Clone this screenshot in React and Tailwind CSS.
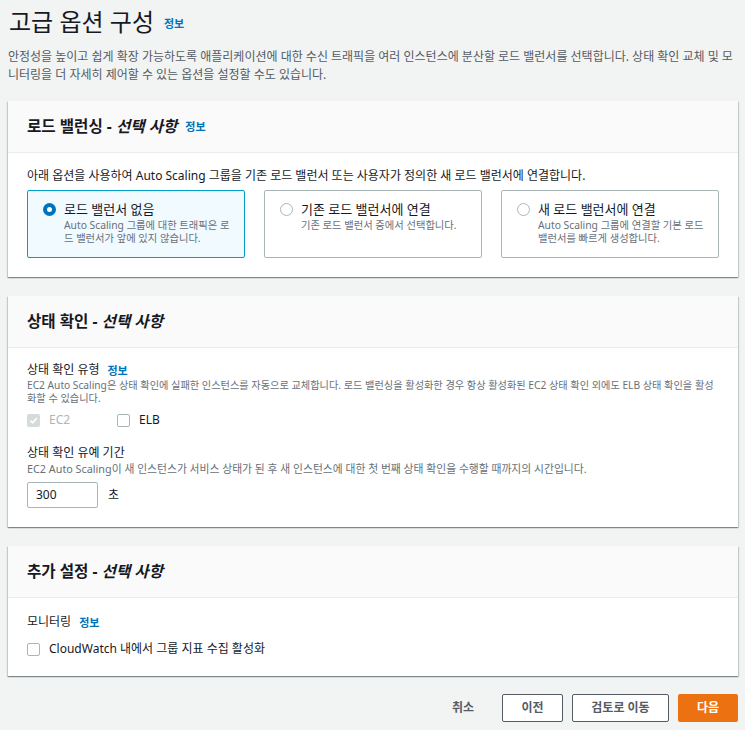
import React from "react";

const FONT = { fontFamily: '"Noto Sans", "Noto Sans CJK KR", sans-serif' };

function Info() {
  return <span className="ml-[8px] text-[11px] font-bold text-[#0073bb] leading-none">정보</span>;
}

function Card({ title, info, children, bodyClass }) {
  return (
    <div className="bg-white shadow-[0_1px_1px_0_rgba(0,28,36,0.3),1px_1px_1px_0_rgba(0,28,36,0.15),-1px_1px_1px_0_rgba(0,28,36,0.15)]">
      <div className="h-[52px] bg-[#fafafa] border-b border-[#eaeded] flex items-center px-[19px]">
        <span className="text-[15.6px] font-bold text-[#16191f]">
          {title} - <i>선택 사항</i>
        </span>
        {info && <Info />}
      </div>
      <div className={bodyClass}>{children}</div>
    </div>
  );
}

function Radio({ checked }) {
  return checked ? (
    <span className="mt-[3px] w-[13px] h-[13px] rounded-full border-[4px] border-[#0073bb] bg-white shrink-0" />
  ) : (
    <span className="mt-[3px] w-[13px] h-[13px] rounded-full border border-[#aab7b8] bg-white shrink-0" />
  );
}

function Tile({ checked, title, desc }) {
  return (
    <div
      className={
        "flex-1 h-[68px] border rounded-[2px] flex gap-[8px] pl-[15px] pr-[10px] pt-[9px] " +
        (checked ? "border-[#00a1c9] bg-[#f1faff]" : "border-[#aab7b8] bg-white")
      }
    >
      <Radio checked={checked} />
      <div className="min-w-0">
        <div className="text-[13px] leading-[18px] text-[#16191f]">{title}</div>
        <div className="text-[10.3px] leading-[13px] text-[#687078] mt-[1px]">{desc}</div>
      </div>
    </div>
  );
}

function Checkbox({ checked, disabled }) {
  if (checked && disabled) {
    return (
      <span className="w-[13px] h-[13px] rounded-[2px] bg-[#d5dbdb] flex items-center justify-center shrink-0">
        <svg width="9" height="9" viewBox="0 0 10 10">
          <path d="M1.5 5.2 L4 7.6 L8.6 2.4" fill="none" stroke="white" strokeWidth="1.8" />
        </svg>
      </span>
    );
  }
  return <span className="w-[13px] h-[13px] rounded-[2px] border border-[#aab7b8] bg-white shrink-0" />;
}

export default function App() {
  return (
    <div style={FONT} className="bg-[#f2f3f3] min-h-[730px] pl-[8px] pr-[7px] pt-[6px] pb-[10px] text-[#16191f]">
      <div className="flex items-center h-[32px]">
        <h1 className="text-[24px] leading-[32px] font-normal text-[#16191f] pl-[1px]">고급 옵션 구성</h1>
        <span className="ml-[10px] mt-[4px] text-[11px] font-bold text-[#0073bb]">정보</span>
      </div>
      <p className="mt-[10px] text-[12px] leading-[18px] text-[#545b64]">
        안정성을 높이고 쉽게 확장 가능하도록 애플리케이션에 대한 수신 트래픽을 여러 인스턴스에 분산할 로드 밸런서를 선택합니다. 상태 확인 교체 및 모니터링을 더 자세히 제어할 수 있는 옵션을 설정할 수도 있습니다.
      </p>

      <div className="mt-[17px] flex flex-col gap-[19px]">
        <Card title="로드 밸런싱" info bodyClass="px-[19px] pt-[14px] pb-[19px]">
          <div className="text-[12px] leading-[18px] text-[#16191f]">
            아래 옵션을 사용하여 Auto Scaling 그룹을 기존 로드 밸런서 또는 사용자가 정의한 새 로드 밸런서에 연결합니다.
          </div>
          <div className="mt-[5px] flex gap-[19px]">
            <Tile checked title="로드 밸런서 없음" desc="Auto Scaling 그룹에 대한 트래픽은 로드 밸런서가 앞에 있지 않습니다." />
            <Tile title="기존 로드 밸런서에 연결" desc="기존 로드 밸런서 중에서 선택합니다." />
            <Tile title="새 로드 밸런서에 연결" desc="Auto Scaling 그룹에 연결할 기본 로드 밸런서를 빠르게 생성합니다." />
          </div>
        </Card>

        <Card title="상태 확인" bodyClass="px-[19px] pt-[13px] pb-[19px]">
          <div className="flex items-center text-[12px] leading-[18px]">
            상태 확인 유형 <Info />
          </div>
          <div className="text-[10.2px] leading-[13px] text-[#687078]">
            EC2 Auto Scaling은 상태 확인에 실패한 인스턴스를 자동으로 교체합니다. 로드 밸런싱을 활성화한 경우 항상 활성화된 EC2 상태 확인 외에도 ELB 상태 확인을 활성화할 수 있습니다.
          </div>
          <div className="mt-[6px] flex items-center h-[18px]">
            <div className="w-[90px] flex items-center gap-[9px]">
              <Checkbox checked disabled />
              <span className="text-[12px] text-[#aab7b8]">EC2</span>
            </div>
            <div className="flex items-center gap-[9px]">
              <Checkbox />
              <span className="text-[12px] text-[#16191f]">ELB</span>
            </div>
          </div>
          <div className="mt-[15px] text-[12px] leading-[18px]">상태 확인 유예 기간</div>
          <div className="text-[10.8px] leading-[13px] text-[#687078]">
            EC2 Auto Scaling이 새 인스턴스가 서비스 상태가 된 후 새 인스턴스에 대한 첫 번째 상태 확인을 수행할 때까지의 시간입니다.
          </div>
          <div className="mt-[7px] flex items-center gap-[10px]">
            <div className="w-[71px] h-[26px] border border-[#aab7b8] rounded-[2px] flex items-center px-[8px] text-[12px] bg-white">
              300
            </div>
            <span className="text-[12px]">초</span>
          </div>
        </Card>

        <Card title="추가 설정" bodyClass="px-[19px] pt-[15px] pb-[18px]">
          <div className="flex items-center text-[12px] leading-[18px]">
            모니터링 <Info />
          </div>
          <div className="mt-[9px] flex items-center gap-[9px] h-[18px]">
            <Checkbox />
            <span className="text-[12px]">CloudWatch 내에서 그룹 지표 수집 활성화</span>
          </div>
        </Card>
      </div>

      <div className="mt-[18px] flex justify-end items-center gap-[9px]">
        <button className="h-[28px] px-[19px] text-[12px] font-bold text-[#545b64]">취소</button>
        <button className="h-[28px] w-[61px] border border-[#545b64] rounded-[2px] bg-white text-[12px] font-bold text-[#545b64]">이전</button>
        <button className="h-[28px] w-[97px] border border-[#545b64] rounded-[2px] bg-white text-[12px] font-bold text-[#545b64]">검토로 이동</button>
        <button className="h-[28px] w-[60px] rounded-[2px] bg-[#ec7211] text-[12px] font-bold text-white">다음</button>
      </div>
    </div>
  );
}
